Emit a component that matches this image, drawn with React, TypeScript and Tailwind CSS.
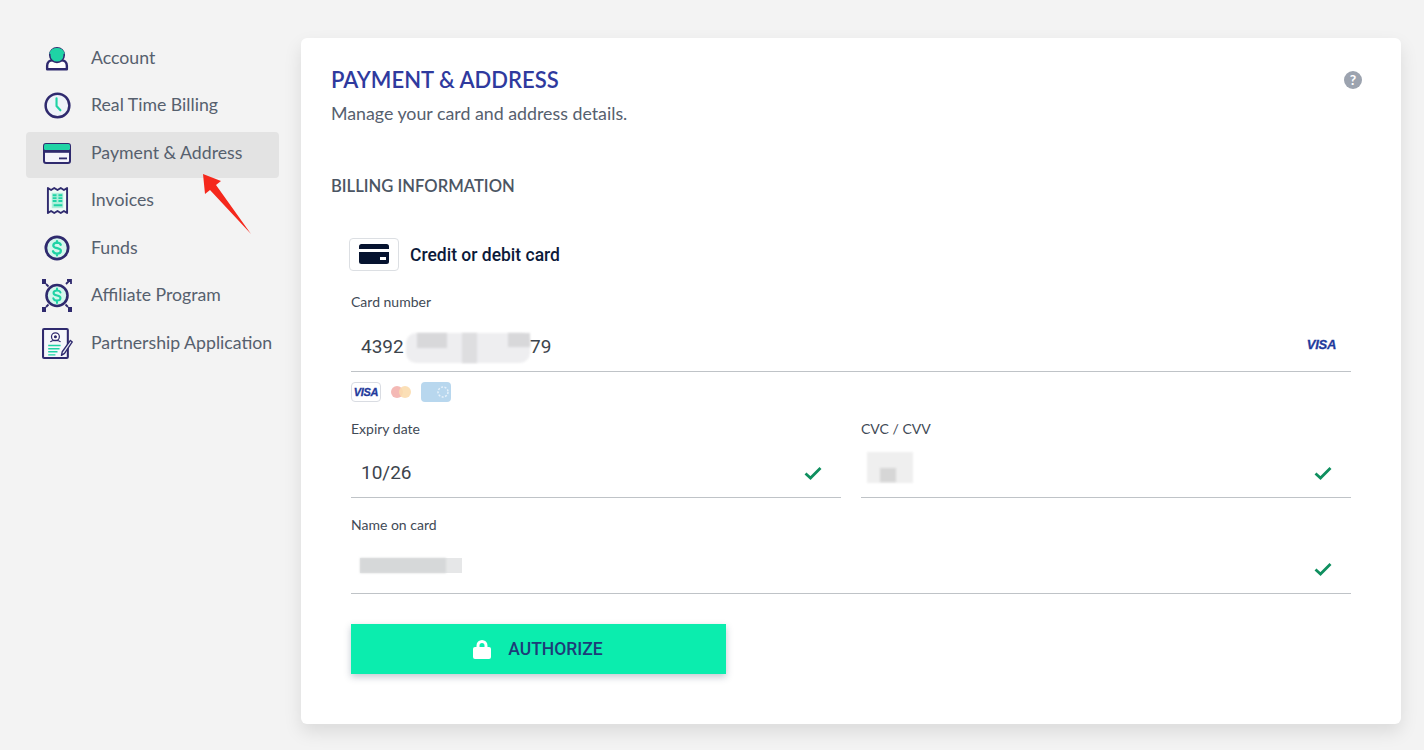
import React from "react";

const NAVY = "#2f2a6e";
const TEAL = "#1fd3a5";

function IconAccount() {
  return (
    <svg width="24" height="25" viewBox="0 0 28 28" fill="none">
      <path d="M2.500 26.500v-4c0-4 3-6.500 6.500-6.500h10c3.500 0 6.500 2.500 6.500 6.500v4z" fill="#fff" stroke={NAVY} strokeWidth="2.800" strokeLinejoin="round" />
      <circle cx="14" cy="10" r="8.500" fill={TEAL} stroke={NAVY} strokeWidth="1.800" />
      <path d="M6 8.500a8.500 8.500 0 0 1 16 0" stroke={TEAL} strokeWidth="2.200" />
    </svg>
  );
}
function IconClock() {
  return (
    <svg width="27" height="27" viewBox="0 0 28 28" fill="none">
      <circle cx="14" cy="14" r="12.300" fill="#eef3f9" stroke={NAVY} strokeWidth="2.600" />
      <path d="M13 6.500v8l4 4.500" stroke={TEAL} strokeWidth="2.200" strokeLinecap="round" strokeLinejoin="round" />
    </svg>
  );
}
function IconCard() {
  return (
    <svg width="28" height="21" viewBox="0 0 28 21" fill="none">
      <rect x="1" y="1" width="26" height="19" rx="2" fill="#f4f4fb" stroke={NAVY} strokeWidth="2" />
      <rect x="1" y="1" width="26" height="6" rx="1.500" fill={TEAL} />
      <rect x="1" y="7" width="26" height="2.800" fill={NAVY} />
      <rect x="16" y="14.500" width="8" height="1.800" fill={NAVY} />
    </svg>
  );
}
function IconInvoice() {
  return (
    <svg width="23" height="29" viewBox="0 0 24 30" fill="none">
      <path d="M2 2l3.300 2 3.300-2 3.400 2 3.400-2 3.300 2 3.300-2v26l-3.300-2-3.300 2-3.400-2-3.400 2-3.300-2-3.300 2z" fill="#eefaf6" stroke={NAVY} strokeWidth="2" strokeLinejoin="round" />
      <rect x="6" y="7" width="12" height="16" fill="#aeeeda" />
      <path d="M7 9.500h4M13 9.500h4M7 12.500h4M13 12.500h4M7 15.500h4M13 15.500h4M8 20h9" stroke={TEAL} strokeWidth="2" />
    </svg>
  );
}
function DollarCoin() {
  return (
    <svg width="26" height="26" viewBox="0 0 28 28" fill="none">
      <circle cx="14" cy="14" r="12" fill="#d4f6ec" stroke={NAVY} strokeWidth="3" />
      <path d="M18 10.500c-.6-1.500-2-2.300-4-2.300-2.300 0-4 1.200-4 3 0 4 8.200 2 8.200 5.800 0 1.800-1.800 3-4.200 3-2.200 0-3.700-.9-4.300-2.500M14 6.500v2M14 20v2" stroke={TEAL} strokeWidth="2.400" strokeLinecap="round" />
    </svg>
  );
}
function IconAffiliate() {
  return (
    <svg width="30" height="33" viewBox="0 0 30 33" fill="none">
      <circle cx="15" cy="16.500" r="10.500" fill="#d4f6ec" stroke={NAVY} strokeWidth="2.600" />
      <path d="M18.500 13.500c-.5-1.300-1.800-2-3.500-2-2 0-3.500 1-3.500 2.500 0 3.400 7 1.800 7 5 0 1.500-1.500 2.500-3.500 2.500-1.800 0-3.200-.8-3.700-2.200M15 9.500v2M15 22v2" stroke={TEAL} strokeWidth="2" strokeLinecap="round" />
      <rect x="0" y="0" width="4" height="5" fill={NAVY} />
      <rect x="0" y="28" width="4" height="5" fill={NAVY} />
      <rect x="26" y="28" width="4" height="5" fill={NAVY} />
      <path d="M24 5l4-4M25 1h4v4" stroke={NAVY} strokeWidth="1.800" />
      <path d="M4 5l2.500 2.500M4 28l2.500-2.500M26 28l-2.500-2.500" stroke={NAVY} strokeWidth="1.800" />
    </svg>
  );
}
function IconPartner() {
  return (
    <svg width="31" height="31" viewBox="0 0 30 30" fill="none">
      <rect x="1" y="1" width="24" height="28" rx="1" fill="#f5f7fb" stroke={NAVY} strokeWidth="2" />
      <circle cx="13" cy="8.500" r="3.800" fill="#fff" stroke={NAVY} strokeWidth="1.200" />
      <circle cx="13" cy="8.500" r="1.500" fill={NAVY} />
      <path d="M8 13.500c1-1 2.500-1.500 5-1.500s4 .5 5 1.500" stroke={NAVY} strokeWidth="1.100" />
      <path d="M6 17h12M6 20h11M6 23h9M6 26h7" stroke={TEAL} strokeWidth="1.400" />
      <path d="M27.500 12l1.800 1.500-7.500 11-3 2 .8-3.500z" fill="#e9ebf4" stroke={NAVY} strokeWidth="1.300" strokeLinejoin="round" />
    </svg>
  );
}

function VisaMark({ className }: { className: string }) {
  return (
    <span className={className} style={{ fontFamily: "'Liberation Sans', sans-serif" }}>
      VISA
    </span>
  );
}

function Check() {
  return (
    <svg width="18" height="14" viewBox="0 0 18 14" fill="none" className="mt-[3px]">
      <path d="M1.500 7.500l5 4.500 10-10" stroke="#0f8f5f" strokeWidth="2.800" />
    </svg>
  );
}

function Label({ children }: { children: React.ReactNode }) {
  return <div className="h-[18px] text-[14px] leading-[18px] text-[#3f4a56]">{children}</div>;
}

const nav: [React.ReactNode, string, boolean][] = [
  [<IconAccount />, "Account", false],
  [<IconClock />, "Real Time Billing", false],
  [<IconCard />, "Payment & Address", true],
  [<IconInvoice />, "Invoices", false],
  [<DollarCoin />, "Funds", false],
  [<IconAffiliate />, "Affiliate Program", false],
  [<IconPartner />, "Partnership Application", false],
];

export default function App() {
  return (
    <div className="relative flex h-[750px] w-[1424px] gap-[22px] overflow-hidden bg-[#f3f3f3] pl-[26px] pt-[34.5px] font-['Lato',sans-serif]">
      <nav className="w-[253px] shrink-0">
        {nav.map(([icon, label, active]) => (
          <div
            key={label}
            className={`flex items-center rounded text-[17.7px] text-[#56606e] ${active ? "mb-[-1px] mt-[2.5px] h-[46px] bg-[#e3e3e3] pb-[3px]" : "h-[47.5px]"}`}
          >
            <span className="flex w-[65px] shrink-0 justify-center pr-[3px]">{icon}</span>
            <span className="whitespace-nowrap">{label}</span>
          </div>
        ))}
      </nav>

      <main className="mt-[3.5px] h-[686px] w-[1100px] shrink-0 rounded-md bg-white px-[30px] pt-[26px] shadow-[0_8px_18px_rgba(0,0,0,0.1)]">
        <div className="flex items-start justify-between pr-[9px]">
          <div>
            <h1 className="text-[22px] font-semibold leading-[32px] text-[#2f3a9e]">PAYMENT &amp; ADDRESS</h1>
            <p className="text-[17.8px] leading-[34px] text-[#56606e]">Manage your card and address details.</p>
          </div>
          <div className="mt-[7px] flex h-[18px] w-[18px] items-center justify-center rounded-full bg-[#9ca3af] text-[14px] font-bold leading-none text-white">
            ?
          </div>
        </div>

        <h2 className="mt-[42px] text-[16.6px] font-semibold leading-[28px] text-[#4b5563]">BILLING INFORMATION</h2>

        <div className="ml-[18px] mt-[38px] flex h-[32px] items-center">
          <div className="flex h-[33px] w-[50px] items-center justify-center rounded border border-[#dcdfe3] bg-white">
            <svg width="30" height="20" viewBox="0 0 30 20">
              <rect width="30" height="20" rx="2.500" fill="#06132f" />
              <rect y="5" width="30" height="3" fill="#fff" />
              <rect x="21" y="13" width="6" height="3" fill="#fff" />
            </svg>
          </div>
          <span className="ml-[11px] mt-[2px] font-['Roboto',sans-serif] text-[17.5px] font-medium text-[#0c1a3a]">Credit or debit card</span>
        </div>

        <div className="ml-[20px] mr-[20px] mt-[23px] w-[1000px]">
          <Label>Card number</Label>
          <div className="relative flex h-[61px] items-center border-b border-[#bfc3c7] pl-[10px] pt-[7px] font-['Roboto',sans-serif] text-[19px] text-[#3d444c]">
            <span className="mt-[5px] w-[44px]">4392</span>
            <span className="absolute left-[55px] top-[22px] h-[30px] w-[124px] rounded-[10px] bg-[#eeeef0] blur-[1px]" />
            <span className="absolute left-[66px] top-[22px] h-[15px] w-[30px] bg-[#d8d8da] blur-[1px]" />
            <span className="absolute left-[111px] top-[22px] h-[30px] w-[15px] bg-[#dedee0] blur-[1px]" />
            <span className="absolute left-[157px] top-[22px] h-[14px] w-[22px] bg-[#d8d8da] blur-[1px]" />
            <span className="relative ml-[125px] mt-[5px]">79</span>
            <VisaMark className="ml-auto mr-[15px] text-[13px] font-bold italic tracking-[-0.3px] text-[#1f3a9c] [-webkit-text-stroke:0.3px_#1f3a9c]" />
          </div>
          <div className="mt-[10px] flex h-[20px] items-center">
            <div className="flex h-[20px] w-[30px] items-center justify-center rounded-sm border border-[#d9dce2] bg-white">
              <VisaMark className="text-[11px] font-bold italic tracking-[-0.3px] text-[#23399b] [-webkit-text-stroke:0.3px_#23399b]" />
            </div>
            <div className="flex w-[40px] justify-center pb-[1px]">
              <span className="h-[12px] w-[12px] rounded-full bg-[#f4b9b5]" />
              <span className="-ml-[4px] h-[12px] w-[12px] rounded-full bg-[#fbdcae] opacity-90" />
            </div>
            <div className="flex h-[20px] w-[30px] items-center justify-end rounded-sm bg-[#b8d7ee] pr-[1px]">
              <svg width="16" height="14" viewBox="0 0 16 14" fill="none">
                <circle cx="9" cy="7" r="5" stroke="#e6f1fa" strokeWidth="1.500" strokeDasharray="2 1.500" />
              </svg>
            </div>
          </div>

          <div className="mt-[18px] flex gap-[20px]">
            <div className="w-[490px]">
              <Label>Expiry date</Label>
              <div className="flex h-[60px] items-center justify-between border-b border-[#bfc3c7] pl-[10px] pr-[19px] pt-[8px] font-['Roboto',sans-serif] text-[19px] text-[#3d444c]">
                <span className="mt-[3px]">10/26</span>
                <Check />
              </div>
            </div>
            <div className="w-[490px]">
              <Label>CVC / CVV</Label>
              <div className="relative flex h-[60px] items-center justify-end border-b border-[#bfc3c7] pr-[19px] pt-[8px]">
                <span className="absolute left-[6px] top-[14px] h-[31px] w-[46px] bg-[#efefef] blur-[1px]" />
                <span className="absolute left-[19px] top-[30px] h-[14px] w-[16px] bg-[#d6d6d6] blur-[1px]" />
                <Check />
              </div>
            </div>
          </div>

          <div className="mt-[18px]">
            <Label>Name on card</Label>
            <div className="relative flex h-[60px] items-center justify-end border-b border-[#bfc3c7] pr-[19px] pt-[8px]">
              <span className="absolute left-[9px] top-[24px] h-[15px] w-[102px] bg-[#e6e7e8] blur-[0.5px]" />
              <span className="absolute left-[9px] top-[24px] h-[15px] w-[86px] bg-[#d6d8d9] blur-[1px]" />
              <Check />
            </div>
          </div>

          <button className="mt-[30px] flex h-[50px] w-[375px] items-center justify-center bg-[#0bedae] pr-[1px] font-['Roboto',sans-serif] text-[17.5px] font-medium text-[#1d3c78] shadow-[0_3px_7px_rgba(40,60,90,0.28)]">
            <svg width="18" height="19" viewBox="0 0 18 19" fill="none" className="mr-[17px]">
              <path d="M5 9V5.500a4 4 0 0 1 8 0V9" stroke="#fff" strokeWidth="3" />
              <rect y="7" width="18" height="12" rx="2" fill="#fff" />
            </svg>
            AUTHORIZE
          </button>
        </div>
      </main>

      <svg className="absolute left-[200px] top-[172px]" width="54" height="64" viewBox="0 0 54 64" fill="none">
        <path d="M3 2l18 7-5 4 35 49-41-44-5 4z" fill="#f5281c" />
      </svg>
    </div>
  );
}
